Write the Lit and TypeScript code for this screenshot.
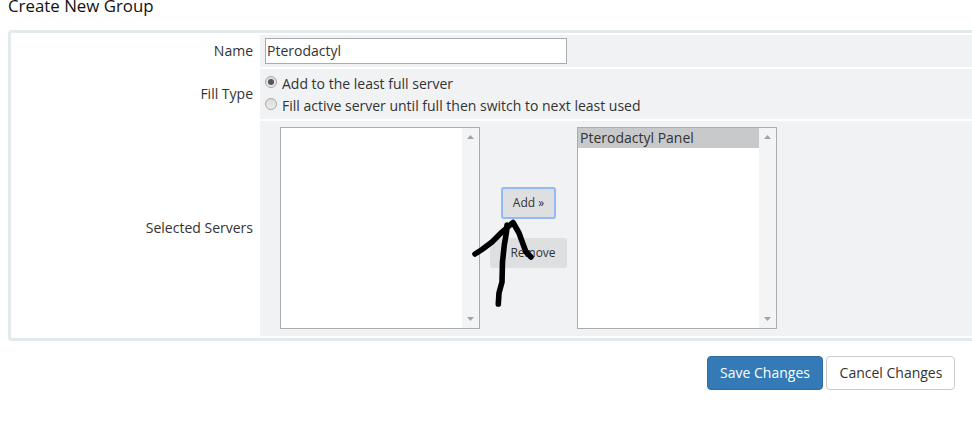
import { LitElement, html, css } from "lit";
import { customElement, property } from "lit/decorators.js";

@customElement("radio-option")
class RadioOption extends LitElement {
  @property({ type: Boolean }) checked = false;

  static styles = css`
    :host {
      display: flex;
      height: 22px;
      line-height: 22px;
    }
    .dot {
      box-sizing: border-box;
      width: 12px;
      height: 12px;
      margin: 3px 5px 0 0;
      border: 1px solid #a9a9a9;
      border-radius: 50%;
      background: linear-gradient(#dcdcdc, #ececec);
      display: grid;
      place-items: center;
    }
    .mark {
      width: 6px;
      height: 6px;
      border-radius: 50%;
      background: #555;
    }
  `;

  render() {
    return html`
      <span class="dot">${this.checked ? html`<span class="mark"></span>` : ""}</span>
      <slot></slot>
    `;
  }
}

@customElement("list-box")
class ListBox extends LitElement {
  @property({ attribute: false }) options: string[] = [];

  static styles = css`
    :host {
      box-sizing: border-box;
      width: 200px;
      height: 202px;
      border: 1px solid #a9abad;
      background: #fff;
      display: flex;
    }
    .items {
      flex: 1;
    }
    .item {
      height: 20px;
      line-height: 20px;
      padding-left: 2px;
      background: #c8c9ca;
    }
    .bar {
      width: 17px;
      background: #f3f4f5;
      display: flex;
      flex-direction: column;
      justify-content: space-between;
      align-items: center;
      padding: 7px 0;
      box-sizing: border-box;
    }
    svg {
      display: block;
      fill: #a3a3a3;
    }
  `;

  render() {
    return html`
      <div class="items">${this.options.map((o) => html`<div class="item">${o}</div>`)}</div>
      <div class="bar">
        <svg width="7" height="4"><path d="M0 4L3.5 0L7 4Z" /></svg>
        <svg width="7" height="4"><path d="M0 0L3.5 4L7 0Z" /></svg>
      </div>
    `;
  }
}

@customElement("app-root")
class AppRoot extends LitElement {
  static styles = css`
    :host {
      display: block;
      position: relative;
      width: 972px;
      height: 426px;
      overflow: hidden;
      box-sizing: border-box;
      padding-left: 8px;
      background: #fff;
      color: #333;
      font: 14px/20px "Open Sans", sans-serif;
    }
    .title {
      height: 30px;
      line-height: 12px;
      font-size: 16.85px;
      color: #111;
    }
    .panel {
      box-sizing: border-box;
      height: 311px;
      border: 3px solid #e2eaed;
      border-right: 0;
      border-radius: 4px 0 0 4px;
      padding: 2px 0;
      display: grid;
      grid-template-columns: 249px 1fr;
      grid-template-rows: 32px 50px 215px;
      row-gap: 2px;
    }
    .label {
      display: flex;
      align-items: center;
      justify-content: flex-end;
      padding-right: 7px;
    }
    .tall {
      padding-bottom: 2px;
    }
    .field {
      background: #f1f2f4;
      padding: 3px 5px;
    }
    .text {
      box-sizing: border-box;
      display: block;
      width: 302px;
      height: 26px;
      border: 1px solid #a9abad;
      padding: 0 1px 2px;
      border-radius: 0;
      background: #fff;
      color: #333;
      font: inherit;
      outline: none;
    }
    .radios {
      padding-top: 4px;
    }
    .servers {
      padding: 6px 20px;
      display: flex;
    }
    .moves {
      width: 97px;
      height: 202px;
      display: flex;
      flex-direction: column;
      align-items: center;
      gap: 19px;
      padding-top: 60px;
      box-sizing: border-box;
    }
    .btn {
      box-sizing: border-box;
      display: flex;
      align-items: center;
      justify-content: center;
      border-radius: 3px;
      font-size: 12px;
    }
    .add {
      width: 55px;
      height: 32px;
      background: #dedfe0;
      border: 2px solid #94b9f8;
    }
    .remove {
      width: 77px;
      height: 30px;
      padding-left: 9px;
      background: #dedfe1;
    }
    .actions {
      display: flex;
      justify-content: flex-end;
      gap: 3px;
      padding: 15px 17px 0 0;
    }
    .save,
    .cancel {
      height: 34px;
      border-radius: 4px;
      font-size: 14px;
    }
    .save {
      width: 116px;
      color: #fff;
      background: #337ab7;
      border: 1px solid #2e6da4;
    }
    .cancel {
      width: 129px;
      background: #fff;
      border: 1px solid #ccc;
      padding-left: 1px;
    }
    .arrow {
      position: absolute;
      left: 470px;
      top: 216px;
      fill: none;
      stroke: #000;
      stroke-width: 5.6;
      stroke-linecap: round;
      stroke-linejoin: round;
    }
  `;

  render() {
    return html`
      <div class="title">Create New Group</div>
      <div class="panel">
        <div class="label">Name</div>
        <div class="field"><input class="text" .value=${"Pterodactyl"} /></div>
        <div class="label">Fill Type</div>
        <div class="field radios">
          <radio-option checked>Add to the least full server</radio-option>
          <radio-option>Fill active server until full then switch to next least used</radio-option>
        </div>
        <div class="label tall">Selected Servers</div>
        <div class="field servers">
          <list-box></list-box>
          <div class="moves">
            <div class="btn add">Add »</div>
            <div class="btn remove">Remove</div>
          </div>
          <list-box .options=${["Pterodactyl Panel"]}></list-box>
        </div>
      </div>
      <div class="actions">
        <div class="btn save">Save Changes</div>
        <div class="btn cancel">Cancel Changes</div>
      </div>
      <svg class="arrow" width="70" height="94" viewBox="0 0 70 94">
        <path d="M5 38L12 33.5L22 26L32 16L43 6.5L49 17L53 28L56 36L61 41" />
        <path d="M37 9L36.5 16L34.3 29L32.5 46L32 66L29 77L28.3 88" />
      </svg>
    `;
  }
}
